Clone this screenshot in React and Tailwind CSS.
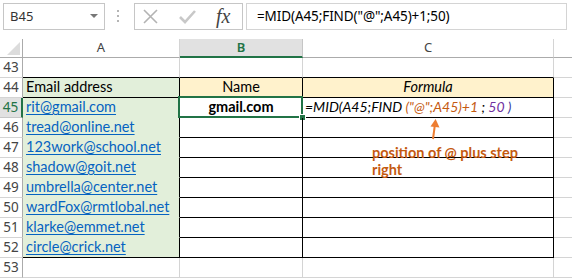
const cellFont = { fontFamily: 'Lato, "Open Sans", sans-serif' };
const uiFont = { fontFamily: '"Noto Sans", "Open Sans", sans-serif' };

const emails = [
  'rit@gmail.com',
  'tread@online.net',
  '123work@school.net',
  'shadow@goit.net',
  'umbrella@center.net',
  'wardFox@rmtlobal.net',
  'klarke@emmet.net',
  'circle@crick.net',
];

const FormulaBar = () => (
  <div className="h-[39px] flex items-start pt-[3px] bg-white" style={uiFont}>
    {/* name box */}
    <div className="ml-[3px] w-[102px] h-[27px] border border-[#c6c6c6] flex items-center justify-between pl-[6px] pr-[6px]">
      <span className="text-[13px] text-[#333]">B45</span>
      <svg width="8" height="5" viewBox="0 0 8 5"><path d="M0 0h8L4 4z" fill="#777" /></svg>
    </div>
    <div className="ml-[12px] mt-[7px] flex flex-col gap-[3px]">
      <div className="w-[2px] h-[2px] bg-[#b5b5b5]" />
      <div className="w-[2px] h-[2px] bg-[#b5b5b5]" />
      <div className="w-[2px] h-[2px] bg-[#b5b5b5]" />
    </div>
    {/* cancel / enter / fx */}
    <div className="ml-[15px] w-[109px] h-[27px] border border-[#c6c6c6] flex items-center">
      <svg className="ml-[8px]" width="15" height="15" viewBox="0 0 15 15">
        <path d="M1 1L14 14M14 1L1 14" stroke="#b3b3b3" strokeWidth="1.6" fill="none" />
      </svg>
      <svg className="ml-[21px]" width="17" height="14" viewBox="0 0 17 14">
        <path d="M1 7L6 12L16 1" stroke="#c8c8c8" strokeWidth="2.6" fill="none" />
      </svg>
      <span className="ml-[20px] text-[20px] italic text-[#444] leading-none pb-[2px]" style={{ fontFamily: '"Liberation Serif", serif' }}>fx</span>
    </div>
    <div className="ml-[3px] w-[321px] h-[27px] border border-[#d4d4d4] flex items-center pl-[10px]">
      <span className="text-[13.5px] text-black tracking-[-0.1px]">=MID(A45;FIND("@";A45)+1;50)</span>
    </div>
  </div>
);

const HeaderRow = () => (
  <div className="flex h-[19px] bg-white" style={uiFont}>
    <div className="w-[23px] border-r border-b border-[#ababab] flex items-end justify-end pr-[2px] pb-[2px]">
      <svg width="13" height="13" viewBox="0 0 13 13"><path d="M13 0V13H0z" fill="#dcdcdc" /></svg>
    </div>
    <div className="w-[157px] border-r border-r-[#d4d4d4] border-b border-b-[#ababab] flex items-center justify-center text-[13px] text-[#444]">A</div>
    <div className="w-[123px] bg-[#e1e1e1] border-r border-r-[#c6c6c6] border-b-2 border-b-[#217346] flex items-center justify-center text-[13px] text-[#217346] font-semibold">B</div>
    <div className="w-[251px] border-r border-r-[#d4d4d4] border-b border-b-[#ababab] flex items-center justify-center text-[13px] text-[#444]">C</div>
    <div className="flex-1 border-b border-[#ababab]" />
  </div>
);

const FormulaCell = () => (
  <span className="italic text-[14px]">
    <span className="text-black">=MID(A45;FIND </span>
    <span className="text-[#c55a11]">(&quot;@&quot;;A45)+1</span>
    <span className="text-black"> ; </span>
    <span className="text-[#7030a0]">50</span>
    <span className="text-[#3a3aa0]"> )</span>
  </span>
);

const Row = ({ n }) => {
  const inTable = n >= 44 && n <= 52;
  const idx = n - 45;
  const email = idx >= 0 && idx < emails.length ? emails[idx] : null;

  let aCls = 'w-[157px] border-r border-b border-[#d4d4d4]';
  if (n === 43) aCls = 'w-[157px] border-r border-r-[#d4d4d4] border-b border-b-black';
  else if (n === 44 || n === 52) aCls = 'w-[157px] bg-[#e2efda] border-r border-b border-black';
  else if (inTable) aCls = 'w-[157px] bg-[#e2efda] border-r border-r-black border-b border-b-[#e2efda]';

  let bCls = 'w-[123px] border-r border-b border-[#d4d4d4]';
  if (n === 43) bCls = 'w-[123px] border-r border-r-[#d4d4d4] border-b border-b-black';
  else if (n === 44) bCls = 'w-[123px] bg-[#fff2cc] border-r border-b border-black';
  else if (inTable) bCls = 'w-[123px] border-r border-b border-black';

  let cCls = 'w-[251px] border-r border-b border-[#d4d4d4]';
  if (n === 43) cCls = 'w-[251px] border-r border-r-[#d4d4d4] border-b border-b-black';
  else if (n === 44) cCls = 'w-[251px] bg-[#fff2cc] border-r border-b border-black';
  else if (inTable) cCls = 'w-[251px] border-r border-b border-black';

  const selected = n === 45;

  return (
    <div className="flex h-[20px]">
      <div
        className={
          selected
            ? 'w-[23px] bg-[#e1e1e1] border-r-2 border-r-[#217346] border-b border-b-[#c6c6c6] flex items-center justify-center text-[13.5px] text-[#217346]'
            : 'w-[23px] border-r border-r-[#ababab] border-b border-b-[#d4d4d4] flex items-center justify-center text-[13.5px] text-[#444]'
        }
        style={uiFont}
      >
        {n}
      </div>
      <div className={`${aCls} flex items-end pl-[3px] pb-[1px] text-[14.5px] leading-[18px]`} style={cellFont}>
        {n === 44 && <span className="text-black">Email address</span>}
        {email && <span className="text-[#0563c1] underline underline-offset-[2px]">{email}</span>}
      </div>
      <div className={`${bCls} relative flex items-end justify-center pb-[1px] text-[14.5px] leading-[18px]`} style={cellFont}>
        {n === 44 && <span className="text-black">Name</span>}
        {selected && (
          <>
            <span className="font-bold text-black">gmail.com</span>
            <div className="absolute -left-[2px] -top-[2px] right-[-1px] bottom-[-1px] border-2 border-[#217346]" />
            <div className="absolute right-[-4px] bottom-[-4px] w-[7px] h-[7px] bg-[#217346] border border-white" />
          </>
        )}
      </div>
      <div className={`${cCls} flex items-end pb-[1px] text-[14.5px] leading-[18px] ${n === 44 ? 'justify-center' : 'pl-[2px]'}`} style={cellFont}>
        {n === 44 && <span className="italic text-black">Formula</span>}
        {selected && <FormulaCell />}
      </div>
      <div className="flex-1 border-b border-[#d4d4d4]" />
    </div>
  );
};

export default function App() {
  const rowNums = [43, 44, 45, 46, 47, 48, 49, 50, 51, 52, 53];
  return (
    <div className="w-[572px] h-[279px] overflow-hidden bg-white relative">
      <FormulaBar />
      <HeaderRow />
      {rowNums.map(n => <Row key={n} n={n} />)}

      {/* annotation */}
      <svg className="absolute left-[427px] top-[118px]" width="14" height="22" viewBox="0 0 14 22">
        <path d="M6 21L8 6" stroke="#ed7d31" strokeWidth="2" fill="none" />
        <path d="M8.6 1L3.5 8.5L12.5 9.5z" fill="#ed7d31" />
      </svg>
      <div className="absolute left-[372px] top-[144px] text-[14.5px] leading-[17px] font-bold text-[#c55a11]" style={cellFont}>
        position of @ plus step<br />right
      </div>
    </div>
  );
}
